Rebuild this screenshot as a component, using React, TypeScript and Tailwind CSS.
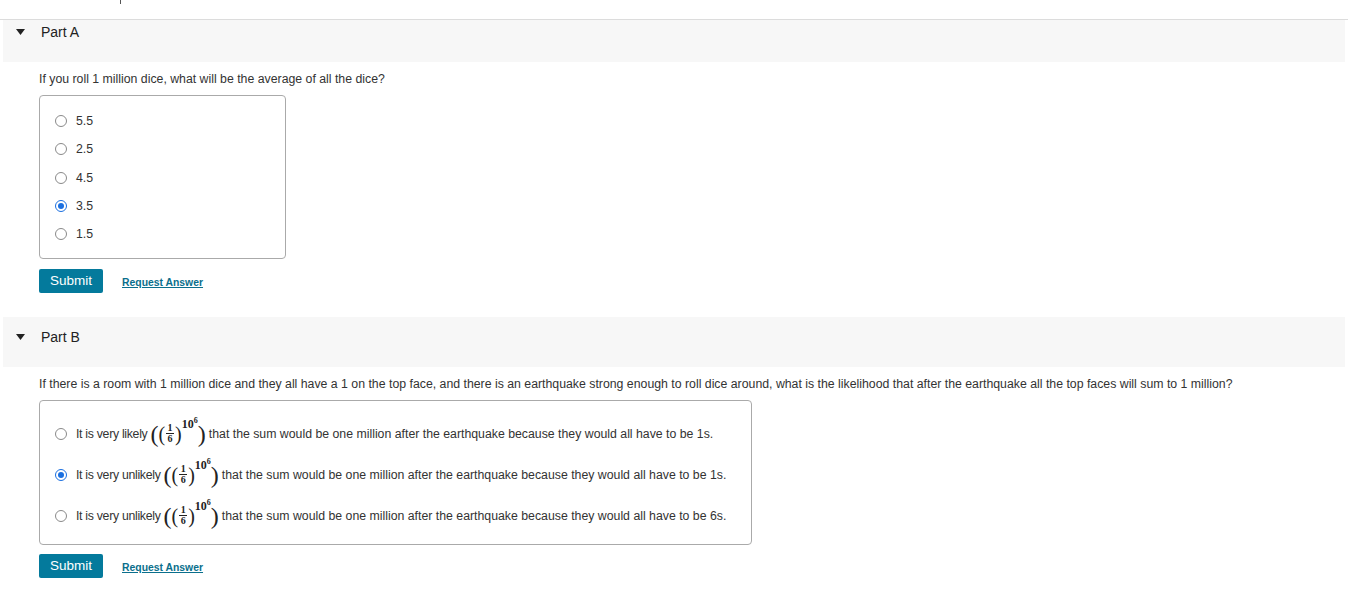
import React from "react";

const font = "font-['Liberation_Sans',Arial,sans-serif]";

function Radio({ checked }: { checked?: boolean }) {
  return checked ? (
    <span className="flex h-[12px] w-[12px] shrink-0 items-center justify-center rounded-full border-[1.5px] border-[#1a6fe0] bg-white">
      <span className="h-[6px] w-[6px] rounded-full bg-[#1a6fe0]" />
    </span>
  ) : (
    <span className="h-[12px] w-[12px] shrink-0 rounded-full border border-[#8a8a8a] bg-white" />
  );
}

function Math() {
  return (
    <span className="mx-[3px] inline-flex items-center font-['Liberation_Serif','DejaVu_Serif',serif] text-[#222]">
      <span className="text-[24px] leading-none">(</span>
      <span className="text-[20px] leading-none">(</span>
      <span className="mx-[1px] inline-flex flex-col items-center text-[10px] font-bold leading-[10px]">
        <span className="px-[1px]">1</span>
        <span className="h-px w-[8px] bg-[#222]" />
        <span className="px-[1px]">6</span>
      </span>
      <span className="text-[20px] leading-none">)</span>
      <span className="relative -top-[10px] text-[12px] font-bold leading-none">
        10<span className="relative -top-[5px] text-[8px]">6</span>
      </span>
      <span className="text-[24px] leading-none">)</span>
    </span>
  );
}

function Actions() {
  return (
    <div className="flex items-center">
      <button className="h-[24px] w-[64px] rounded-[2px] bg-[#047a9c] text-[13.5px] text-white">
        Submit
      </button>
      <a className="ml-[19px] mt-[2px] text-[10.4px] font-bold text-[#0b6f8c] underline">
        Request Answer
      </a>
    </div>
  );
}

function Header({ label, cls }: { label: string; cls: string }) {
  return (
    <div className={`mx-[3px] flex bg-[#f7f7f7] ${cls}`}>
      <div className="flex h-[14px] items-center">
        <svg width="9" height="6" viewBox="0 0 9 6" className="ml-[13px]">
          <path d="M0 0 L9 0 L4.5 6 Z" fill="#222" />
        </svg>
        <span className="ml-[16px] text-[14px] text-[#222]">{label}</span>
      </div>
    </div>
  );
}

export default function App() {
  const optsA = ["5.5", "2.5", "4.5", "3.5", "1.5"];
  const optsB: [string, string, boolean][] = [
    ["It is very likely", "that the sum would be one million after the earthquake because they would all have to be 1s.", false],
    ["It is very unlikely", "that the sum would be one million after the earthquake because they would all have to be 1s.", true],
    ["It is very unlikely", "that the sum would be one million after the earthquake because they would all have to be 6s.", false],
  ];
  return (
    <div className={`${font} h-[590px] w-[1348px] overflow-hidden bg-white text-[#333]`}>
      <div className="h-[20px] border-b border-[#dcdcdc]">
        <div className="ml-[120px] h-[4px] w-[1px] bg-[#555]" />
      </div>
      <Header label="Part A" cls="h-[42px] pt-[5px]" />
      <div className="pl-[39px]">
        <p className="mt-[10px] text-[12.3px] leading-[14px]">
          If you roll 1 million dice, what will be the average of all the dice?
        </p>
        <div className="mt-[9px] w-[247px] rounded-[4px] border border-[#aaaaaa] pb-[10px] pl-[15px] pt-[11px]">
          {optsA.map((o) => (
            <label key={o} className="flex h-[28.3px] items-center">
              <Radio checked={o === "3.5"} />
              <span className="ml-[9px] text-[12.3px]">{o}</span>
            </label>
          ))}
        </div>
        <div className="mt-[10px]">
          <Actions />
        </div>
      </div>
      <div className="mt-[24px]">
        <Header label="Part B" cls="h-[50px] pt-[13px]" />
      </div>
      <div className="pl-[39px]">
        <p className="mt-[10px] text-[12.3px] leading-[14px]">
          If there is a room with 1 million dice and they all have a 1 on the top face, and there is an earthquake strong enough to roll dice around, what is the likelihood that after the earthquake all the top faces will sum to 1 million?
        </p>
        <div className="mt-[9px] w-[713px] rounded-[4px] border border-[#aaaaaa] pb-[8px] pl-[15px] pt-[12px]">
          {optsB.map(([a, b, c], i) => (
            <label key={i} className="flex h-[41px] items-center">
              <Radio checked={c} />
              <span className="ml-[9px] flex items-center text-[12.3px]">
                <span className="tracking-[-0.3px]">{a}</span>
                <Math />
                {b}
              </span>
            </label>
          ))}
        </div>
        <div className="mt-[9px]">
          <Actions />
        </div>
      </div>
    </div>
  );
}
